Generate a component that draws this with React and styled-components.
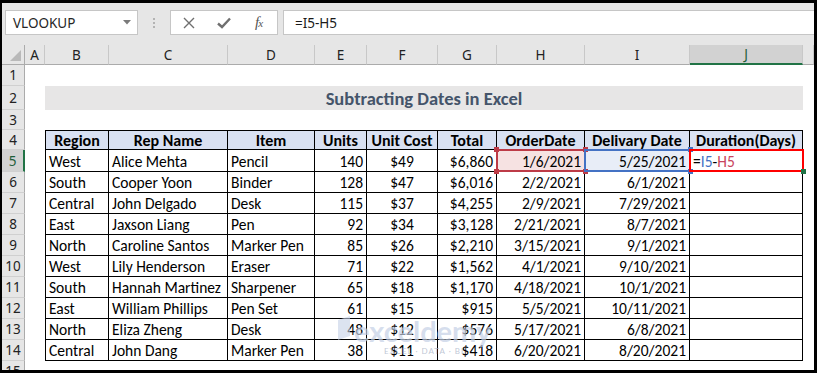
import React from "react";
import styled, { createGlobalStyle, css } from "styled-components";

const GlobalStyle = createGlobalStyle`
  html, body { margin: 0; padding: 0; background: #000; }
  body { width: 817px; height: 373px; overflow: hidden; }
`;

const Frame = styled.div`
  width: 817px;
  height: 373px;
  box-sizing: border-box;
  padding: 3px 3px 3px 2px;
  background: #000;
`;

const Window = styled.div`
  width: 100%;
  height: 100%;
  display: flex;
  flex-direction: column;
  background: #fff;
  overflow: hidden;
`;

const Toolbar = styled.div`
  flex: none;
  height: 42px;
  box-sizing: border-box;
  display: flex;
  align-items: flex-start;
  padding: 7px 0 0 3px;
  background: #e6e6e6;
  font-family: "Noto Sans", "Open Sans", sans-serif;
`;

const NameBox = styled.div`
  width: 133px;
  height: 25px;
  box-sizing: border-box;
  display: flex;
  align-items: center;
  justify-content: space-between;
  padding: 0 6px 0 7px;
  border: 1px solid #c6c6c6;
  background: #fff;
  font-size: 13.5px;
  color: #262626;
`;

const Grip = styled.div`
  width: 32px;
  height: 25px;
  display: flex;
  flex-direction: column;
  align-items: center;
  justify-content: center;
  gap: 2px;

  span {
    width: 2px;
    height: 2px;
    background: #b3b3b3;
  }
`;

const Buttons = styled.div`
  width: 108px;
  height: 25px;
  box-sizing: border-box;
  display: flex;
  border: 1px solid #c6c6c6;
  background: #fff;
`;

const IconSlot = styled.div`
  width: 35px;
  height: 100%;
  display: flex;
  align-items: center;
  justify-content: center;
  color: #6f6f6f;
`;

const Fx = styled.span`
  font-family: "Liberation Serif", serif;
  font-style: italic;
  font-size: 15px;
  color: #555;
  letter-spacing: -1px;

  small {
    font-size: 11px;
  }
`;

const FormulaBox = styled.div`
  flex: 1;
  height: 25px;
  margin: 0 -3px 0 5px;
  box-sizing: border-box;
  display: flex;
  align-items: center;
  padding-left: 11px;
  border: 1px solid #c6c6c6;
  background: #fff;
  font-size: 13.5px;
  color: #1a1a1a;
`;

const Sheet = styled.div`
  position: relative;
  flex: 1;
  display: grid;
  grid-template-columns: 23px 20px 64px 119px 87px 52px 71px 59px 88px 105px 113px 1fr;
  grid-template-rows: 20px 21px 24px 20px 20px 22px repeat(10, 21px);
  font-family: "Carlito", "Calibri", Lato, sans-serif;
`;

const Corner = styled.div`
  box-sizing: border-box;
  display: flex;
  align-items: flex-end;
  justify-content: flex-end;
  padding: 0 3px 3px 0;
  background: #e6e6e6;
  border-right: 1px solid #ababab;
  border-bottom: 1px solid #ababab;
`;

const ColHead = styled.div`
  box-sizing: border-box;
  display: flex;
  align-items: center;
  justify-content: center;
  background: #e6e6e6;
  border-right: 1px solid #c8c8c8;
  border-bottom: 1px solid #ababab;
  font-family: "Noto Sans", "Open Sans", sans-serif;
  font-size: 13.5px;
  color: #222;

  ${(p) =>
    p.$active &&
    css`
      background: #d2d2d2;
      border-bottom: 2px solid #217346;
      color: #1e5e3a;
    `}
`;

const RowHead = styled.div`
  box-sizing: border-box;
  display: flex;
  align-items: center;
  justify-content: center;
  background: #e6e6e6;
  border-right: 1px solid #ababab;
  border-bottom: 1px solid #d0d0d0;
  font-family: "Noto Sans", "Open Sans", sans-serif;
  font-size: 13.5px;
  color: #222;

  ${(p) =>
    p.$active &&
    css`
      background: #d2d2d2;
      border-right: 2px solid #217346;
      color: #1e5e3a;
    `}
`;

const Blank = styled.div`
  background: #fff;
`;

const Title = styled.div`
  grid-column: span 9;
  display: flex;
  align-items: center;
  justify-content: center;
  background: #e7e6e6;
  font-size: 18.5px;
  font-weight: 700;
  color: #44546a;
`;

const TCell = styled.div`
  position: relative;
  box-sizing: border-box;
  display: flex;
  align-items: center;
  justify-content: ${(p) =>
    p.$align === "right" ? "flex-end" : p.$align === "center" ? "center" : "flex-start"};
  padding: 1px 3px 0;
  border-right: 1px solid #000;
  border-bottom: 1px solid #000;
  background: ${(p) => p.$bg || (p.$head ? "#d9e1f2" : "#fff")};
  font-size: ${(p) => (p.$head ? "16px" : "15.5px")};
  font-weight: ${(p) => (p.$head ? 700 : 400)};
  color: #000;
  white-space: nowrap;

  ${(p) => p.$first && css`border-left: 1px solid #000;`}
  ${(p) => p.$top && css`border-top: 1px solid #000;`}
`;

const Marquee = styled.div`
  position: absolute;
  inset: -1px -2px -1px -1px;
  border: 2px solid ${(p) => p.$color};
  z-index: ${(p) => p.$z || 2};
  pointer-events: none;
`;

const Handle = styled.span`
  position: absolute;
  width: 5px;
  height: 5px;
  background: ${(p) => p.$color};
  ${(p) => (p.$v === "t" ? "top: -4px;" : "bottom: -4px;")}
  ${(p) => (p.$h === "l" ? "left: -4px;" : "right: -4px;")}
`;

const Ref = styled.span`
  color: ${(p) => p.$color};
`;

const Watermark = styled.div`
  position: absolute;
  left: 334px;
  top: 271px;
  display: flex;
  align-items: flex-start;
  gap: 2px;
  z-index: 4;
  pointer-events: none;
  font-family: Lato, "Noto Sans", sans-serif;
`;

const MarkText = styled.div`
  display: flex;
  flex-direction: column;
  line-height: 1;

  b {
    font-size: 29px;
    font-weight: 700;
    color: rgba(196, 208, 230, 0.7);
  }

  small {
    margin: 2px 0 0 30px;
    font-size: 8px;
    letter-spacing: 1px;
    color: rgba(170, 180, 200, 0.75);
  }
`;

const heads = ["Region", "Rep Name", "Item", "Units", "Unit Cost", "Total", "OrderDate", "Delivary Date", "Duration(Days)"];
const align = ["left", "left", "left", "right", "center", "right", "right", "right", "left"];
const data = [
  ["West", "Alice Mehta", "Pencil", "140", "$49", "$6,860", "1/6/2021", "5/25/2021"],
  ["South", "Cooper Yoon", "Binder", "128", "$47", "$6,016", "2/2/2021", "6/1/2021"],
  ["Central", "John Delgado", "Desk", "115", "$37", "$4,255", "2/9/2021", "7/29/2021"],
  ["East", "Jaxson Liang", "Pen", "92", "$34", "$3,128", "2/21/2021", "8/7/2021"],
  ["North", "Caroline Santos", "Marker Pen", "85", "$26", "$2,210", "3/15/2021", "9/1/2021"],
  ["West", "Lily Henderson", "Eraser", "71", "$22", "$1,562", "4/1/2021", "9/10/2021"],
  ["South", "Hannah Martinez", "Sharpener", "65", "$18", "$1,170", "4/18/2021", "10/1/2021"],
  ["East", "William Phillips", "Pen Set", "61", "$15", "$915", "5/5/2021", "10/11/2021"],
  ["North", "Eliza Zheng", "Desk", "48", "$12", "$576", "5/17/2021", "6/8/2021"],
  ["Central", "John Dang", "Marker Pen", "38", "$11", "$418", "6/20/2021", "8/20/2021"],
];
const letters = ["A", "B", "C", "D", "E", "F", "G", "H", "I", "J", ""];

const corners = [["t", "l"], ["t", "r"], ["b", "l"], ["b", "r"]];

function Selection({ color, z, handles }) {
  return (
    <Marquee $color={color} $z={z}>
      {handles.map(([v, h]) => (
        <Handle key={v + h} $v={v} $h={h} $color={color} />
      ))}
    </Marquee>
  );
}

function Cell({ r, i, value }) {
  const base = { $align: align[i], $first: i === 0 };
  if (r === 5 && i === 6) {
    return (
      <TCell {...base} $bg="#f6e2e2">
        {value}
        <Selection color="#bd3b47" handles={corners} />
      </TCell>
    );
  }
  if (r === 5 && i === 7) {
    return (
      <TCell {...base} $bg="#e8edf7">
        {value}
        <Selection color="#4472c4" handles={[["t", "r"], ["b", "r"]]} />
      </TCell>
    );
  }
  if (r === 5 && i === 8) {
    return (
      <TCell {...base}>
        =<Ref $color="#4472c4">I5</Ref>-<Ref $color="#c8455e">H5</Ref>
        <Selection color="#ff0000" z={3} handles={[]} />
        <Handle $v="b" $h="r" $color="#217346" style={{ zIndex: 4, bottom: "-3px", right: "-4px" }} />
      </TCell>
    );
  }
  return <TCell {...base}>{value}</TCell>;
}

export default function App() {
  const cells = [];
  for (let r = 1; r <= 15; r++) {
    cells.push(
      <RowHead key={`rh${r}`} $active={r === 5}>
        {r}
      </RowHead>
    );
    if (r === 2) {
      cells.push(<Blank key="a2" />, <Title key="title">Subtracting Dates in Excel</Title>, <Blank key="k2" />);
    } else if (r === 4) {
      cells.push(<Blank key="a4" />);
      heads.forEach((h, i) =>
        cells.push(
          <TCell key={`h${i}`} $head $top $first={i === 0} $align="center">
            {h}
          </TCell>
        )
      );
      cells.push(<Blank key="k4" />);
    } else if (r >= 5 && r <= 14) {
      const row = [...data[r - 5], ""];
      cells.push(<Blank key={`a${r}`} />);
      row.forEach((v, i) => cells.push(<Cell key={`${r}-${i}`} r={r} i={i} value={v} />));
      cells.push(<Blank key={`k${r}`} />);
    } else {
      for (let c = 0; c < 11; c++) cells.push(<Blank key={`${r}-b${c}`} />);
    }
  }

  return (
    <Frame>
      <GlobalStyle />
      <Window>
        <Toolbar>
          <NameBox>
            VLOOKUP
            <svg width="8" height="5" viewBox="0 0 8 5">
              <polygon points="0,0 8,0 4,4.5" fill="#7a7a7a" />
            </svg>
          </NameBox>
          <Grip>
            <span />
            <span />
            <span />
          </Grip>
          <Buttons>
            <IconSlot>
              <svg width="12" height="12" viewBox="0 0 12 12">
                <path d="M1 1 L11 11 M11 1 L1 11" stroke="#6f6f6f" strokeWidth="1.4" />
              </svg>
            </IconSlot>
            <IconSlot>
              <svg width="14" height="12" viewBox="0 0 14 12">
                <path d="M1 6.5 L5 10 L13 1.5" fill="none" stroke="#6f6f6f" strokeWidth="2.4" />
              </svg>
            </IconSlot>
            <IconSlot>
              <Fx>
                f<small>x</small>
              </Fx>
            </IconSlot>
          </Buttons>
          <FormulaBox>=I5-H5</FormulaBox>
        </Toolbar>
        <Sheet>
          <Corner>
            <svg width="11" height="11" viewBox="0 0 11 11">
              <polygon points="11,0 11,11 0,11" fill="#b9b9b9" />
            </svg>
          </Corner>
          {letters.map((l, i) => (
            <ColHead key={`c${i}`} $active={l === "J"}>
              {l}
            </ColHead>
          ))}
          {cells}
          <Watermark>
            <svg width="16" height="24" viewBox="0 0 16 24">
              <path d="M2 4 L14 0 L14 20 L2 24 Z" fill="rgba(196,208,230,0.6)" />
            </svg>
            <MarkText>
              <b>exceldemy</b>
              <small>EXCEL · DATA · BI</small>
            </MarkText>
          </Watermark>
        </Sheet>
      </Window>
    </Frame>
  );
}
